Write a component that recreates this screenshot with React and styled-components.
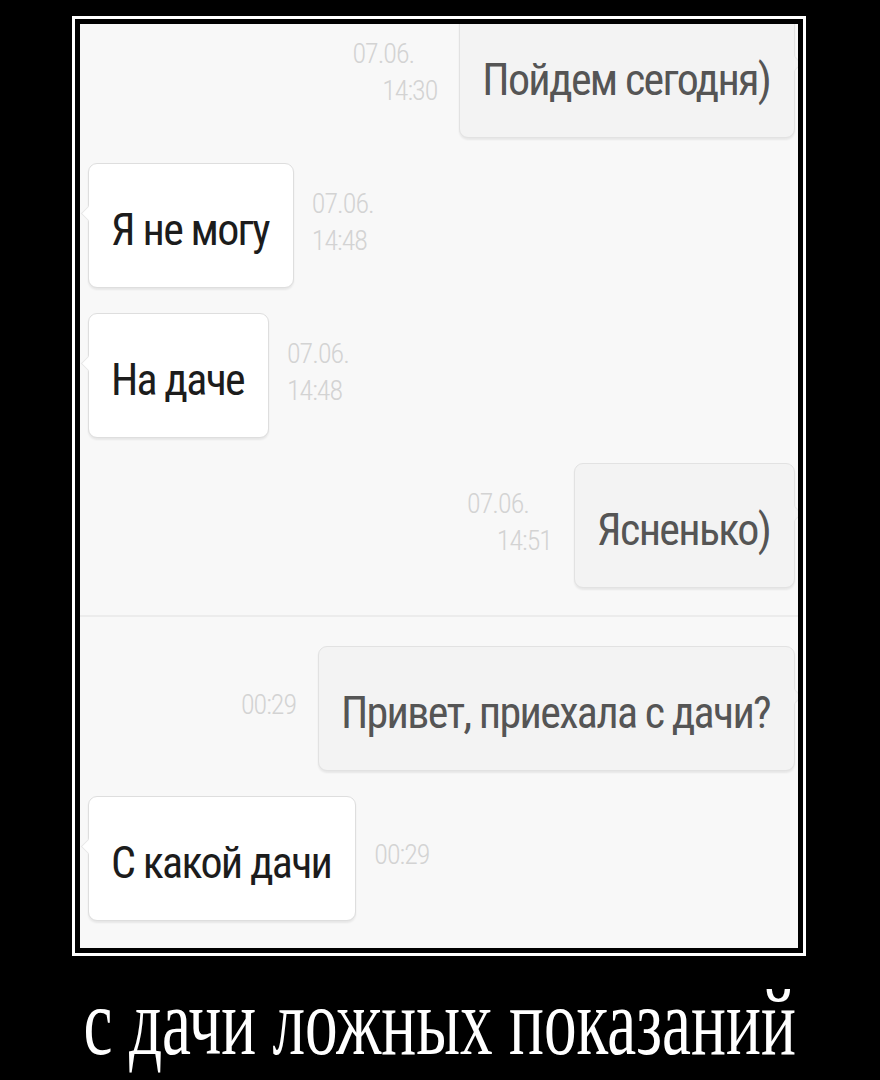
import React from "react";
import styled, { createGlobalStyle } from "styled-components";

const GlobalStyle = createGlobalStyle`
  html, body {
    margin: 0;
    padding: 0;
    background: #000;
  }
`;

const Page = styled.div`
  width: 880px;
  height: 1080px;
  background: #000;
  display: flex;
  flex-direction: column;
  align-items: center;
  overflow: hidden;
`;

const Frame = styled.div`
  margin-top: 16px;
  margin-left: -2px;
  width: 734px;
  height: 940px;
  box-sizing: border-box;
  border: 3px solid #fff;
  padding: 5px;
  background: #000;
`;

const Screen = styled.div`
  height: 100%;
  background: #f8f8f8;
  overflow: hidden;
  display: flex;
  flex-direction: column;
  font-family: Roboto, "DejaVu Sans Condensed", sans-serif;
  font-stretch: 75%;
`;

const Messages = styled.div`
  display: flex;
  flex-direction: column;
  gap: 25px;
  margin-top: ${(p) => p.$offset || 0}px;
  padding: 0 3px 0 8px;
`;

const Row = styled.div`
  display: flex;
  align-items: center;
  justify-content: ${(p) => (p.$out ? "flex-end" : "flex-start")};
  gap: ${(p) => (p.$out ? 22 : 18)}px;
`;

const Bubble = styled.div`
  position: relative;
  height: 125px;
  box-sizing: border-box;
  display: flex;
  align-items: center;
  padding: 8px 24px 0 22px;
  font-size: 44px;
  letter-spacing: -1.7px;
  border-radius: 9px;
  border: 1px solid ${(p) => (p.$out ? "#e2e2e2" : "#dedede")};
  background: ${(p) => (p.$out ? "#f3f3f3" : "#fff")};
  color: ${(p) => (p.$out ? "#555" : "#1c1c1c")};
  box-shadow: 0 2px 2px rgba(0, 0, 0, 0.07);

  &::before {
    content: "";
    position: absolute;
    top: 44px;
    ${(p) => (p.$out ? "right: -6px;" : "left: -6px;")}
    width: 10px;
    height: 10px;
    background: inherit;
    border-left: 1px solid #e8e8e8;
    border-bottom: 1px solid #e8e8e8;
    transform: rotate(${(p) => (p.$out ? 225 : 45)}deg);
  }
`;

const Stamp = styled.div`
  display: flex;
  flex-direction: column;
  align-items: ${(p) => (p.$out ? "flex-end" : "flex-start")};
  padding-bottom: 8px;
  font-size: 28px;
  font-weight: 300;
  letter-spacing: -1px;
  line-height: 37px;
  color: #d3d3d3;
`;

const StampDate = styled.span`
  margin-right: ${(p) => (p.$out ? 23 : 0)}px;
`;

const Divider = styled.div`
  height: 2px;
  background: #ececec;
  margin: 27px 0 29px;
`;

const Caption = styled.div`
  margin-top: 18px;
  font-family: "Liberation Serif", "DejaVu Serif", serif;
  font-size: 96px;
  line-height: 96px;
  color: #fff;
  white-space: nowrap;
  transform: scaleX(0.68);
`;

const Message = ({ out, text, date, time }) => {
  const stamp = (
    <Stamp $out={out}>
      {date && <StampDate $out={out}>{date}</StampDate>}
      <span>{time}</span>
    </Stamp>
  );
  return (
    <Row $out={out}>
      {out && stamp}
      <Bubble $out={out}>{text}</Bubble>
      {!out && stamp}
    </Row>
  );
};

const App = () => {
  return (
    <Page>
      <GlobalStyle />
      <Frame>
        <Screen>
          <Messages $offset={-11}>
            <Message out text="Пойдем сегодня)" date="07.06." time="14:30" />
            <Message text="Я не могу" date="07.06." time="14:48" />
            <Message text="На даче" date="07.06." time="14:48" />
            <Message out text="Ясненько)" date="07.06." time="14:51" />
          </Messages>
          <Divider />
          <Messages>
            <Message out text="Привет, приехала с дачи?" time="00:29" />
            <Message text="С какой дачи" time="00:29" />
          </Messages>
        </Screen>
      </Frame>
      <Caption>с дачи ложных показаний</Caption>
    </Page>
  );
};

export default App;
